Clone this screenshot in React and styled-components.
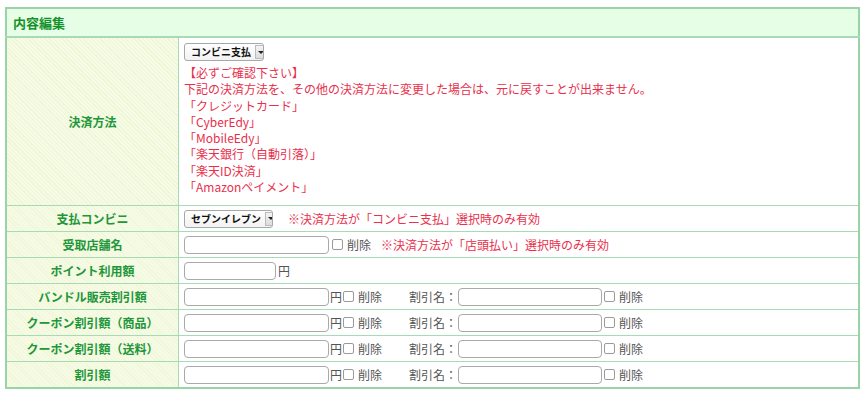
import React from "react";
import styled, { createGlobalStyle } from "styled-components";

const Global = createGlobalStyle`
  html, body { margin: 0; padding: 0; background: #fff; }
  body { font-family: "Noto Sans CJK JP", "Noto Sans", sans-serif; font-size: 12px; color: #333; line-height: 16px; }
`;

const Page = styled.div`
  padding: 7px 7px 0 5px;
`;

const Table = styled.table`
  width: 855px;
  border-collapse: collapse;
  border: 2px solid #99d4a8;
`;

const HeadCell = styled.th`
  background: #e6fde6;
  border: 1px solid #a6dbb5;
  border-bottom: 2px solid #a6dbb5;
  height: 27px;
  padding: 0 6px;
  text-align: left;
  color: #14922a;
  font-size: 13px;
  font-weight: bold;
`;

const Label = styled.th`
  width: 171px;
  background-color: #f3fae0;
  background-image: repeating-linear-gradient(
    45deg,
    #eef6d6 0px,
    #eef6d6 1px,
    #f5fbe5 1px,
    #f5fbe5 3px
  );
  border: 1px solid #a6dbb5;
  color: #22963a;
  font-weight: bold;
  font-size: 12px;
  text-align: center;
  vertical-align: middle;
  padding: 0;
`;

const Value = styled.td`
  border: 1px solid #a6dbb5;
  padding: ${(p) => (p.$tall ? "5px 5px 10px" : "3px 5px 3px")};
  height: ${(p) => (p.$tall ? "auto" : "19px")};
  vertical-align: middle;
  background: #fff;
`;

const Line = styled.div`
  display: flex;
  align-items: center;
  white-space: nowrap;
`;

const SelectBox = styled.div`
  display: inline-flex;
  align-items: center;
  height: 18px;
  box-sizing: border-box;
  border: 1px solid #a8a8a8;
  border-radius: 3px;
  background: linear-gradient(#ffffff, #f2f2f2);
  font-size: 10px;
  font-weight: bold;
  color: #111;
  padding-left: 6px;
  width: ${(p) => p.$w}px;
  justify-content: space-between;
  white-space: nowrap;
  overflow: hidden;
  flex: none;
`;

const Arrow = styled.span`
  width: 12px;
  height: 14px;
  margin-right: 2px;
  margin-left: 4px;
  border: 1px solid #bcbcbc;
  background: linear-gradient(#f4f4f4, #dcdcdc);
  display: flex;
  align-items: center;
  justify-content: center;
  box-sizing: border-box;
  flex: none;
  &::after {
    content: "";
    border-left: 3px solid transparent;
    border-right: 3px solid transparent;
    border-top: 3px solid #222;
  }
`;

const Notice = styled.div`
  color: #e8304c;
  font-size: 12px;
  line-height: 16.3px;
  margin-top: 4px;
`;

const Red = styled.span`
  color: #e8304c;
  margin-left: ${(p) => p.$ml || 0}px;
`;

const Input = styled.div`
  width: ${(p) => p.$w}px;
  height: 18px;
  box-sizing: border-box;
  border: 1px solid #a9a9a9;
  border-radius: 4px;
  background: #fff;
  flex: none;
`;

const Check = styled.span`
  width: 9px;
  height: 9px;
  border: 1px solid #9a9a9a;
  border-radius: 2px;
  margin-left: ${(p) => p.$ml || 2}px;
  margin-right: 4px;
  flex: none;
  background: #fff;
`;

const Gray = styled.span`
  color: #555;
  font-size: 12px;
  margin-left: ${(p) => p.$ml || 0}px;
  margin-right: ${(p) => p.$mr || 0}px;
`;

const Discount = () => (
  <Line>
    <Input $w={145} />
    <Gray $ml={1}>円</Gray>
    <Check $ml={1} />
    <Gray>削除</Gray>
    <Gray $ml={27} $mr={1}>割引名：</Gray>
    <Input $w={144} />
    <Check $ml={2} />
    <Gray>削除</Gray>
  </Line>
);

const notices = [
  "【必ずご確認下さい】",
  "下記の決済方法を、その他の決済方法に変更した場合は、元に戻すことが出来ません。",
  "「クレジットカード」",
  "「CyberEdy」",
  "「MobileEdy」",
  "「楽天銀行（自動引落）」",
  "「楽天ID決済」",
  "「Amazonペイメント」",
];

export default function App() {
  return (
    <Page>
      <Global />
      <Table>
        <tbody>
          <tr>
            <HeadCell colSpan={2}>内容編集</HeadCell>
          </tr>
          <tr>
            <Label>決済方法</Label>
            <Value $tall>
              <SelectBox $w={80}>
                コンビニ支払
                <Arrow />
              </SelectBox>
              <Notice>
                {notices.map((n) => (
                  <div key={n}>{n}</div>
                ))}
              </Notice>
            </Value>
          </tr>
          <tr>
            <Label>支払コンビニ</Label>
            <Value>
              <Line>
                <SelectBox $w={89}>
                  セブンイレブン
                  <Arrow />
                </SelectBox>
                <Red $ml={15}>※決済方法が「コンビニ支払」選択時のみ有効</Red>
              </Line>
            </Value>
          </tr>
          <tr>
            <Label>受取店舗名</Label>
            <Value>
              <Line>
                <Input $w={145} />
                <Check $ml={3} />
                <Gray>削除</Gray>
                <Red $ml={10}>※決済方法が「店頭払い」選択時のみ有効</Red>
              </Line>
            </Value>
          </tr>
          <tr>
            <Label>ポイント利用額</Label>
            <Value>
              <Line>
                <Input $w={92} />
                <Gray $ml={2}>円</Gray>
              </Line>
            </Value>
          </tr>
          <tr>
            <Label>バンドル販売割引額</Label>
            <Value>
              <Discount />
            </Value>
          </tr>
          <tr>
            <Label>クーポン割引額（商品）</Label>
            <Value>
              <Discount />
            </Value>
          </tr>
          <tr>
            <Label>クーポン割引額（送料）</Label>
            <Value>
              <Discount />
            </Value>
          </tr>
          <tr>
            <Label>割引額</Label>
            <Value>
              <Discount />
            </Value>
          </tr>
        </tbody>
      </Table>
    </Page>
  );
}
